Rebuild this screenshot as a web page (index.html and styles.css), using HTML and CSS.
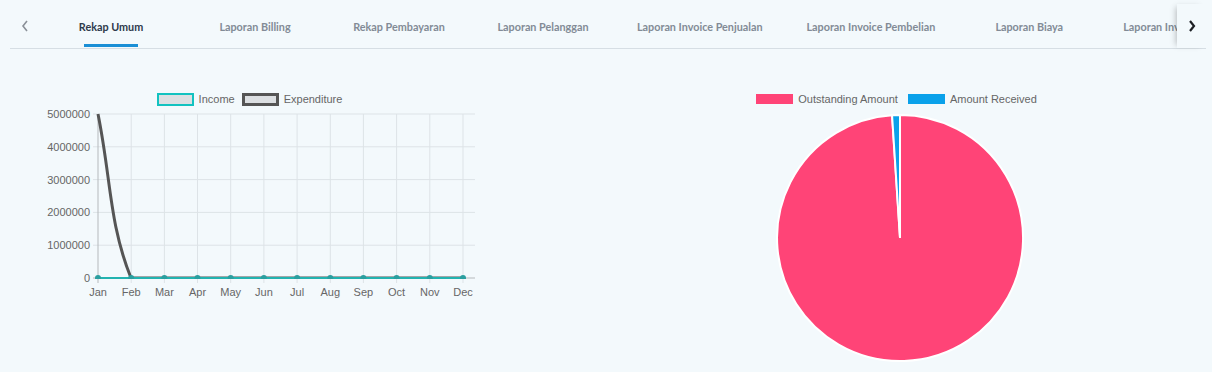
FILE: index.html
```html
<!DOCTYPE html>
<html lang="en">
  <head>
    <title>Laporan</title>
    <link rel="stylesheet" href="styles.css">
  </head>
  <body>
    <div class="tabs">
      <div class="scroll-btn prev">
        <svg width="8" height="12" viewBox="0 0 8 12"><polyline points="6,1 2,6 6,11" fill="none" stroke="#8a9098" stroke-width="1.6"/></svg>
      </div>
      <div class="tab-list">
        <div class="tab active">Rekap Umum</div>
        <div class="tab">Laporan Billing</div>
        <div class="tab">Rekap Pembayaran</div>
        <div class="tab">Laporan Pelanggan</div>
        <div class="tab">Laporan Invoice Penjualan</div>
        <div class="tab">Laporan Invoice Pembelian</div>
        <div class="tab">Laporan Biaya</div>
        <div class="tab">Laporan Invoice Pembayaran</div>
      </div>
      <div class="scroll-btn next">
        <svg width="8" height="12" viewBox="0 0 8 12"><polyline points="2,1 6,6 2,11" fill="none" stroke="#1c1f24" stroke-width="2.2"/></svg>
      </div>
    </div>

    <div class="charts">
      <div class="line-chart">
        <div class="legend">
          <span class="legend-box income"></span><span class="legend-text">Income</span>
          <span class="legend-box expense"></span><span class="legend-text">Expenditure</span>
        </div>
        <svg class="plot" width="450" height="194" viewBox="0 0 450 194">
          <defs>
            <clipPath id="area"><rect x="60" y="0" width="400" height="173"/></clipPath>
          </defs>
          <g class="grid">
            <line x1="65" y1="8" x2="447" y2="8"/>
            <line x1="65" y1="40.8" x2="447" y2="40.8"/>
            <line x1="65" y1="73.6" x2="447" y2="73.6"/>
            <line x1="65" y1="106.4" x2="447" y2="106.4"/>
            <line x1="65" y1="139.2" x2="447" y2="139.2"/>
            <line x1="103.2" y1="8" x2="103.2" y2="177"/>
            <line x1="136.4" y1="8" x2="136.4" y2="177"/>
            <line x1="169.5" y1="8" x2="169.5" y2="177"/>
            <line x1="202.7" y1="8" x2="202.7" y2="177"/>
            <line x1="235.9" y1="8" x2="235.9" y2="177"/>
            <line x1="269.1" y1="8" x2="269.1" y2="177"/>
            <line x1="302.3" y1="8" x2="302.3" y2="177"/>
            <line x1="335.4" y1="8" x2="335.4" y2="177"/>
            <line x1="368.6" y1="8" x2="368.6" y2="177"/>
            <line x1="401.8" y1="8" x2="401.8" y2="177"/>
            <line x1="435" y1="8" x2="435" y2="177"/>
          </g>
          <g class="axis">
            <line x1="70" y1="8" x2="70" y2="177"/>
            <line x1="65" y1="172" x2="447" y2="172"/>
          </g>
          <g class="y-labels">
            <text x="62" y="12">5000000</text>
            <text x="62" y="44.8">4000000</text>
            <text x="62" y="77.6">3000000</text>
            <text x="62" y="110.4">2000000</text>
            <text x="62" y="143.2">1000000</text>
            <text x="62" y="176">0</text>
          </g>
          <g class="x-labels">
            <text x="70" y="190">Jan</text>
            <text x="103.2" y="190">Feb</text>
            <text x="136.4" y="190">Mar</text>
            <text x="169.5" y="190">Apr</text>
            <text x="202.7" y="190">May</text>
            <text x="235.9" y="190">Jun</text>
            <text x="269.1" y="190">Jul</text>
            <text x="302.3" y="190">Aug</text>
            <text x="335.4" y="190">Sep</text>
            <text x="368.6" y="190">Oct</text>
            <text x="401.8" y="190">Nov</text>
            <text x="435" y="190">Dec</text>
          </g>
          <g clip-path="url(#area)">
            <path class="expense-line" d="M70,8 C83.2,73.6 81,117.2 103,172 L435,172"/>
            <path class="income-line" d="M70,172 L435,172"/>
            <g class="income-dots">
              <circle cx="70" cy="172" r="3"/>
              <circle cx="103.2" cy="172" r="3"/>
              <circle cx="136.4" cy="172" r="3"/>
              <circle cx="169.5" cy="172" r="3"/>
              <circle cx="202.7" cy="172" r="3"/>
              <circle cx="235.9" cy="172" r="3"/>
              <circle cx="269.1" cy="172" r="3"/>
              <circle cx="302.3" cy="172" r="3"/>
              <circle cx="335.4" cy="172" r="3"/>
              <circle cx="368.6" cy="172" r="3"/>
              <circle cx="401.8" cy="172" r="3"/>
              <circle cx="435" cy="172" r="3"/>
            </g>
          </g>
        </svg>
      </div>

      <div class="pie-chart">
        <div class="legend">
          <span class="legend-box outstanding"></span><span class="legend-text">Outstanding Amount</span>
          <span class="legend-box received"></span><span class="legend-text">Amount Received</span>
        </div>
        <svg class="pie" width="300" height="260" viewBox="0 0 300 260">
          <path d="M150,132 L150,9 A123,123 0 1 1 142.06,9.26 Z" fill="#ff4477"/>
          <path d="M150,132 L142.06,9.26 A123,123 0 0 1 150,9 Z" fill="#0aa1ea"/>
        </svg>
      </div>
    </div>
  </body>
</html>
```

FILE: styles.css
```css
body {
  margin: 0;
  background: #f3f9fc;
  font-family: Lato, "Noto Sans", sans-serif;
}
.tabs {
  display: flex;
  height: 44px;
  margin: 4px 6px 0 10px;
  border-bottom: 1px solid #d6dee4;
}
.scroll-btn {
  width: 29px;
  flex-shrink: 0;
  display: flex;
  align-items: center;
  justify-content: center;
}
.scroll-btn.next {
  position: relative;
  background: #f3f9fc;
  box-shadow: -4px 0 6px -3px rgba(0, 0, 0, 0.25);
}
.tab-list {
  flex: 1;
  display: flex;
  overflow: hidden;
}
.tab {
  flex-shrink: 0;
  min-width: 144px;
  padding: 0 22px;
  box-sizing: border-box;
  display: flex;
  align-items: center;
  justify-content: center;
  position: relative;
  font-size: 10.8px;
  font-weight: 700;
  color: #828b96;
  white-space: nowrap;
}
.tab.active {
  color: #2e3a4b;
}
.tab.active::after {
  content: "";
  position: absolute;
  bottom: 1px;
  left: 50%;
  width: 54px;
  height: 3px;
  margin-left: -27px;
  background: #1a8fd6;
}

.charts {
  display: flex;
  gap: 272px;
  padding: 43px 0 0 28px;
}
.line-chart {
  width: 450px;
}
.pie-chart {
  width: 300px;
}
.legend {
  display: flex;
  justify-content: center;
  align-items: center;
  height: 14px;
  font-family: "Liberation Sans", Arial, sans-serif;
  font-size: 11px;
  color: #666;
}
.legend-box {
  box-sizing: border-box;
  width: 37px;
  height: 13px;
  margin-right: 5px;
}
.legend-text {
  margin-right: 7px;
}
.legend-box.income {
  background: #dcdfe2;
  border: 2px solid #12c2c0;
}
.legend-box.expense {
  background: #dcdfe2;
  border: 3px solid #555;
}
.legend-box.outstanding {
  height: 10px;
  background: #ff4477;
}
.legend-box.received {
  height: 10px;
  margin-left: 3px;
  background: #0aa1ea;
}
.plot,
.pie {
  display: block;
}
.grid line {
  stroke: #dde3e7;
  stroke-width: 1;
}
.axis line {
  stroke: #b5b9bc;
  stroke-width: 1;
}
.y-labels text,
.x-labels text {
  font-family: "Liberation Sans", Arial, sans-serif;
  font-size: 11px;
  fill: #666;
}
.y-labels text {
  text-anchor: end;
}
.x-labels text {
  text-anchor: middle;
}
.expense-line {
  fill: none;
  stroke: #555;
  stroke-width: 3;
}
.income-line {
  fill: none;
  stroke: #22b3b0;
  stroke-width: 2;
}
.income-dots circle {
  fill: #2a9fa0;
}
.pie path {
  stroke: #fff;
  stroke-width: 2;
}
```
